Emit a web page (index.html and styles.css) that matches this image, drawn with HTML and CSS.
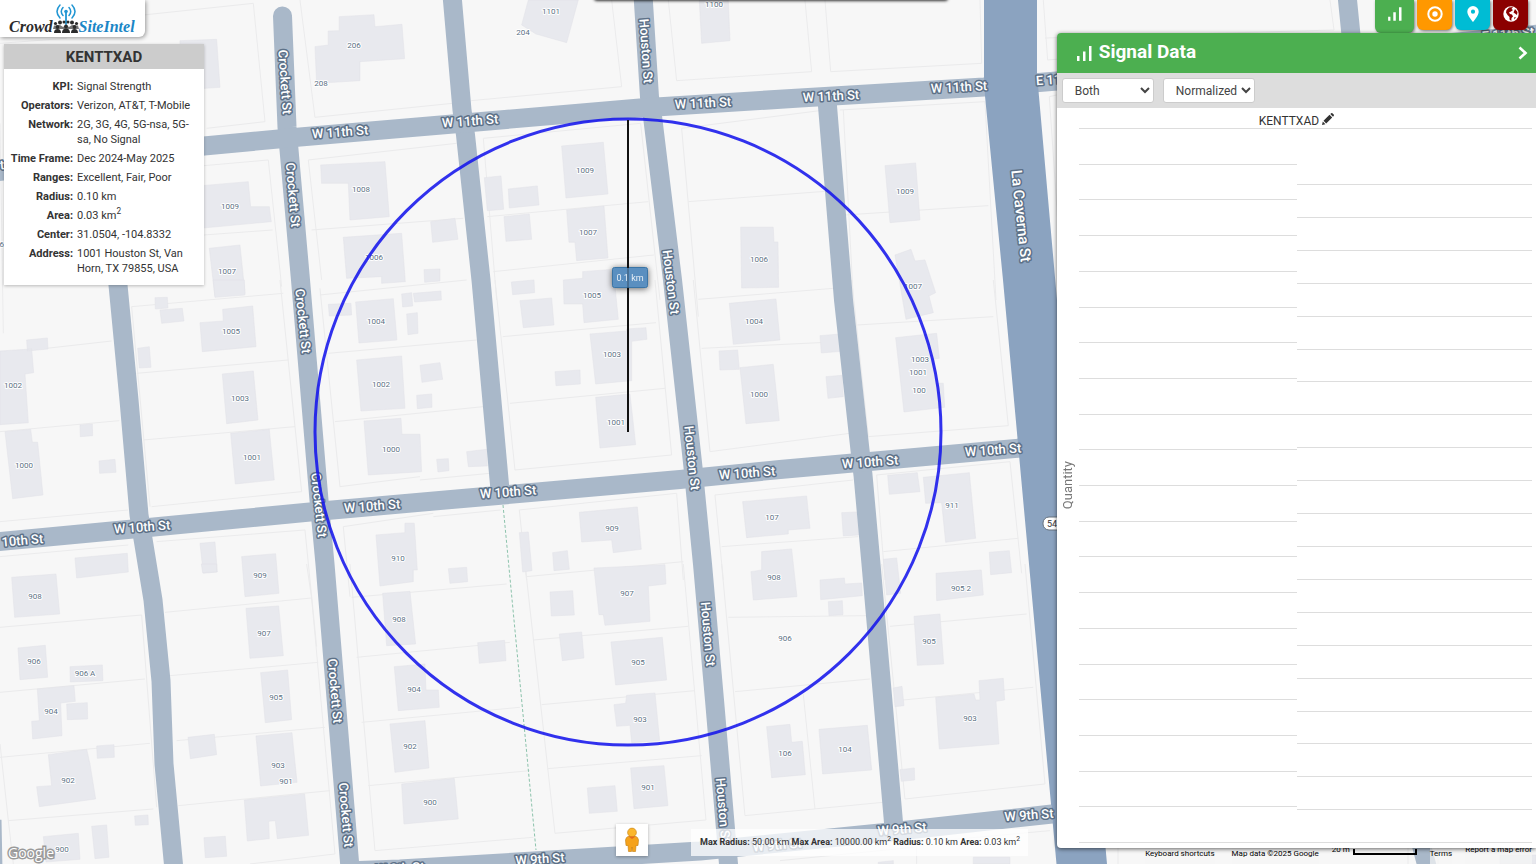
FILE: index.html
```html
<!DOCTYPE html>
<html lang="en">
<head>
<meta charset="utf-8">
<meta name="viewport" content="width=device-width, initial-scale=1">
<title>Crowd SiteIntel</title>
<link rel="stylesheet" href="styles.css">
</head>
<body>
<main class="app">
<svg class="map" viewBox="0 0 1536 864" preserveAspectRatio="xMinYMin slice" role="img" aria-label="Map of Van Horn, TX">
  <!-- Lot boundaries -->
  <g class="lots">
    <g transform="scale(.3333)"><path d="M430 45L760 10 795 365 620 385M900 0L945 352 1358 310M612 497L805 480 845 860M612 705L818 690M925 480L1370 430M925 480L965 840M935 690L1390 655M960 885L1400 840M0 130L200 115M0 370L10 1000"/></g>
    <g transform="translate(400 0) scale(.3333)"><path d="M213 302L665 260 635 0M805 0L830 242 1235 215 1215 0M250 415L722 370 780 900M250 415L290 900M262 650L745 605M280 815L762 765M845 385L1275 330M845 385L895 950M865 605L1330 570"/></g>
    <g transform="translate(780 0) scale(.3333)"><path d="M135 0L152 215 605 190 600 0M180 330L615 305 648 900M195 645L625 617M190 330L220 900M790 0L803 180 900 172M808 290L830 285M808 290L840 760"/></g>
    <g transform="translate(0 280) scale(.3333)"><path d="M140 205L335 183M0 455L358 422M0 725L385 690M395 80L850 40M410 280L865 240M430 480L885 440M455 680L905 635 840 0M395 80L450 680M960 25L1020 620 1260 590M985 220L1430 180M1005 425L1450 380M0 830L385 795M470 785L915 750 950 1100M1030 740L1300 700M1030 740L1050 950"/></g>
    <g transform="translate(400 280) scale(.3333)"><path d="M285 0L345 570 815 525 765 0M308 170L768 128M330 370L795 325M880 0L930 515 1350 460M895 58L1300 25M905 205L1320 185M60 600L270 580M100 710L302 690M358 690L830 640 850 900M358 690L380 900M380 890L850 845M945 645L1360 600M945 645L970 900M965 800L1375 770"/></g>
    <g transform="translate(780 280) scale(.3333)"><path d="M232 135L640 110M215 0L265 470 685 437 640 0M290 585L690 545 725 880M310 815L715 775M290 585L315 900"/></g>
    <g transform="translate(0 564) scale(.3333)"><path d="M0 190L425 153 470 730M0 385L435 345M0 580L450 538M25 770L460 735M0 540L25 770 40 900M495 145L935 102 1005 870 750 900M510 335L955 295M530 530L975 490M535 725L990 680M920 0L935 102M1055 100L1520 60M1070 280L1530 235M1085 475L1560 430M1105 665L1590 620M1050 0L1125 860 1600 820"/></g>
    <g transform="translate(400 564) scale(.3333)"><path d="M375 0L465 808 918 768 850 0M400 228L865 187M425 422L885 380M443 614L905 575M965 0L1035 755 1450 715M985 160L1400 155M1005 383L1410 345M1210 390L1245 735"/></g>
    <g transform="translate(780 564) scale(.3333)"><path d="M305 0L375 705 795 660 735 0M330 187L740 150M350 410L760 370M480 830L810 800M0 890L400 850M410 850V900"/></g>
    <path d="M1118 848V864M1408 848V864M1438 848V864M1330 0L1334 30 1045 38"/>
  </g>
  <!-- Building footprints -->
  <g class="buildings">
    <g transform="scale(.3333)"><path d="M1018 50L1122 44 1125 80 1206 73 1214 176 1080 185 1080 242 950 250 945 140 985 135 985 93 1018 92ZM540 122L650 118 660 262 540 270ZM570 560L745 545 752 620 808 620 814 665 600 685ZM628 745L720 735 735 880 645 890ZM962 495L1155 485 1168 650 1050 660 1045 550 965 550ZM1030 712L1205 700 1216 845 1145 850 1145 830 1040 835Z"/></g>
    <g transform="translate(400 0) scale(.3333)"><path d="M385 0L535 0 500 128 408 102 365 75ZM898 0L985 0 990 122 905 130ZM485 438L610 427 624 582 498 594ZM253 533L303 528 311 628 262 632ZM325 567L412 558 417 615 328 624ZM312 650L388 642 395 718 318 724ZM500 630L612 618 624 774 530 782 525 727 507 727ZM92 665L165 655 174 718 98 727ZM1022 682L1120 682 1122 726 1134 726 1136 862 1025 864ZM334 846L402 840 404 878 338 884ZM72 809L120 807 120 843 74 847ZM490 840L548 835 548 815 640 808 655 958 552 968 548 912 492 912Z"/></g>
    <g transform="translate(780 0) scale(.3333)"><path d="M315 497L407 489 420 660 330 668ZM345 765L393 748 405 783 435 780 467 878 447 888 460 938 378 958Z"/></g>
    <g transform="translate(0 280) scale(.3333)"><path d="M640 0L733 0 735 45 645 52ZM465 53L502 52 504 84 466 87ZM480 90L547 85 552 123 485 130ZM668 88L758 78 768 200 607 215 600 128 670 123ZM413 205L448 200 453 262 418 264ZM80 180L142 174 144 207 82 213ZM0 213L95 207 101 278 75 282 85 428 0 434ZM667 282L760 273 774 420 680 431ZM692 460L808 448 823 600 706 612ZM15 455L92 448 97 487 113 487 129 645 38 656ZM240 435L277 432 278 467 241 470ZM297 543L345 538 348 577 299 580ZM600 790L645 786 652 876 610 880ZM225 834L382 820 385 876 230 894ZM725 830L827 821 837 940 735 950ZM1067 66L1180 56 1191 180 1077 189ZM1070 240L1205 228 1215 385 1083 393ZM1092 423L1203 415 1206 463 1260 463 1265 575 1105 585ZM985 73L1053 70 1055 105 988 108ZM1128 765L1215 758 1215 730 1243 730 1252 870 1240 870 1240 905 1140 918Z"/></g>
    <g transform="translate(400 280) scale(.3333)"><path d="M5 42L35 38 38 78 8 81ZM40 40L123 33 124 60 44 66ZM20 102L52 98 54 160 24 164ZM360 62L455 54 462 135 370 143ZM60 256L120 248 128 298 66 307ZM50 346L95 342 96 382 52 386ZM570 162L680 153 680 147 738 143 741 178 695 184 695 302 587 312ZM465 275L540 270 541 312 468 317ZM587 352L690 342 707 494 600 504ZM988 70L1128 57 1140 180 1000 193ZM957 213L1013 210 1018 268 960 270ZM1020 263L1120 253 1138 422 1038 431ZM200 515L260 508 262 558 205 560ZM110 538L145 536 147 572 114 576ZM538 697L712 681 724 808 640 818 635 780 545 786ZM358 758L385 756 396 872 368 876ZM458 818L502 812 508 868 462 872ZM145 866L200 862 203 905 150 910ZM1028 665L1220 648 1230 745 1165 750 1165 762 1040 773ZM1085 815L1175 807 1191 950 1060 960 1053 875 1085 870Z"/></g>
    <g transform="translate(780 280) scale(.3333)"><path d="M120 167L180 162 184 214 124 219ZM138 290L186 286 190 350 144 355ZM347 173L470 160 478 235 462 237 467 310 490 310 494 382 372 396ZM323 586L412 578 420 635 328 643ZM430 592L568 578 587 775 497 787 485 668 437 670ZM185 698L230 696 236 765 190 768ZM628 817L688 812 695 878 632 884ZM468 880L604 870 610 945 470 962ZM310 838L350 834 362 940 320 945Z"/></g>
    <g transform="translate(0 564) scale(.3333)"><path d="M35 40L168 30 179 150 44 160ZM54 252L136 244 143 340 60 347ZM210 308L307 303 309 350 211 354ZM112 375L222 365 226 412 182 417 186 515 98 525 95 472 118 470ZM200 420L262 416 263 465 202 467ZM145 572L260 556 270 600 287 705 118 728 110 668 155 665ZM290 546L342 542 343 580 292 583ZM130 818L235 808 240 886 138 894ZM275 787L320 783 327 880 285 884ZM404 756L444 753 445 782 406 784ZM738 133L836 126 850 275 750 283ZM782 326L863 318 875 467 796 476ZM768 516L876 506 891 655 782 666ZM564 520L643 511 650 572 571 584ZM733 708L914 690 926 814 832 824 826 770 806 772 808 824 742 831ZM612 821L676 817 680 877 616 881ZM604 0L650 0 650 24 608 26ZM1148 88L1230 82 1247 240 1160 245ZM1183 308L1275 300 1278 378 1315 378 1318 430 1195 440ZM1170 480L1275 470 1287 612 1185 625ZM1205 660L1363 643 1375 765 1212 780Z"/></g>
    <g transform="translate(400 564) scale(.3333)"><path d="M582 12L795 2 798 60 745 66 750 172 615 184 610 152 597 152ZM450 84L518 80 523 153 454 156ZM478 210L545 204 552 282 487 290ZM633 234L787 220 800 348 647 363ZM642 422L677 418 680 394 765 387 779 530 695 536 690 484 650 487ZM692 612L792 605 804 725 702 734ZM562 672L645 665 652 742 568 748ZM233 236L314 229 318 290 238 298ZM1100 488L1170 481 1175 535 1207 532 1216 632 1115 641Z"/></g>
    <g transform="translate(780 564) scale(.3333)"><path d="M120 48L193 42 195 60 245 57 247 95 122 107ZM145 113L187 110 189 152 147 155ZM402 157L480 150 491 300 412 304ZM340 372L366 367 372 425 345 428ZM597 350L670 343 674 408 648 412 657 540 478 555 467 400 582 390 587 408 600 408ZM117 496L262 484 275 618 128 630ZM360 617L403 612 404 648 364 652ZM580 880H690V900H580ZM295 895L340 890V900H295Z"/></g>
    <path d="M1500 855H1536V864H1500Z"/>
  </g>
  <path class="trail" d="M503 505L536 850"/>
  <!-- Streets -->
  <g class="streets">
    <path d="M104 150L118 285 129 400 139 515 144 545 153 600 161 681 164 764 174 870"/>
    <path class="dead-end" d="M282.500 16L287 127 300.500 280 319 500 325 564 350 868"/>
    <path d="M452 -5L462 110 465.500 135 481 280 500 490"/>
    <path d="M643 -5L649.500 97 652.700 118 672.500 280 693 467 702.500 564 714.500 700 729 870"/>
    <path d="M827 100L843.500 300 860 450 863 475 871 564 894 828"/>
    <path d="M-5 172L204 146 300 137 400 128.500 640 108 800 98 984 87 1057 81 1540 34"/>
    <path d="M-5 542L133 529 310 512 400 504 680 479.500 780 469.500 1020 448"/>
    <path d="M345 871L400 869 700 851 890 832 1052 814"/>
    <path d="M1347 -5L1352 45M1420 840L1428 870M-8 820L-7 870"/>
    <path class="highway" d="M984 0H1037V74L1057 300 1107 864H1056.500L1029 564 1003 280 985 96 984 77Z"/>
  </g>
  <g class="street-names">
    <text transform="translate(-24 167) rotate(-5)">W 11th St</text>
    <text transform="translate(340 132) rotate(-4)">W 11th St</text>
    <text transform="translate(470 121) rotate(-4)">W 11th St</text>
    <text transform="translate(703 103) rotate(-3)">W 11th St</text>
    <text transform="translate(831 96) rotate(-3)">W 11th St</text>
    <text transform="translate(959 87) rotate(-3)">W 11th St</text>
    <text transform="translate(1062 79) rotate(-4)">E 11th St</text>
    <text transform="translate(1508 34) rotate(-5)">E 11th St</text>
    <text transform="translate(15 541) rotate(-5)">W 10th St</text>
    <text transform="translate(142 527) rotate(-4)">W 10th St</text>
    <text transform="translate(372 506) rotate(-4)">W 10th St</text>
    <text transform="translate(508 492) rotate(-4)">W 10th St</text>
    <text transform="translate(747 473) rotate(-4)">W 10th St</text>
    <text transform="translate(870 462) rotate(-4)">W 10th St</text>
    <text transform="translate(993 450) rotate(-4)">W 10th St</text>
    <text transform="translate(400 868) rotate(-3)">W 9th St</text>
    <text transform="translate(540 859) rotate(-4)">W 9th St</text>
    <text transform="translate(777 845) rotate(-5)">W 9th St</text>
    <text transform="translate(902 829) rotate(-5)">W 9th St</text>
    <text transform="translate(1029 815) rotate(-4)">W 9th St</text>
    <text transform="translate(285 82) rotate(86)">Crockett St</text>
    <text transform="translate(293 195) rotate(85)">Crockett St</text>
    <text transform="translate(303 321) rotate(84)">Crockett St</text>
    <text transform="translate(319 505) rotate(84)">Crockett St</text>
    <text transform="translate(335 691) rotate(85)">Crockett St</text>
    <text transform="translate(346 815) rotate(85)">Crockett St</text>
    <text transform="translate(646 51) rotate(86)">Houston St</text>
    <text transform="translate(671 282) rotate(83)">Houston St</text>
    <text transform="translate(692 458) rotate(84)">Houston St</text>
    <text transform="translate(708 634) rotate(85)">Houston St</text>
    <text transform="translate(723 810) rotate(85)">Houston St</text>
    <text class="major" transform="translate(1021 216) rotate(84)">La Caverna St</text>
  </g>
  <g class="house-numbers">
    <text x="354" y="45">206</text><text x="321" y="83">208</text><text x="551" y="11">1101</text><text x="523" y="32">204</text><text x="714" y="4">1100</text>
    <text x="230" y="206">1009</text><text x="361" y="189">1008</text><text x="585" y="170">1009</text><text x="905" y="191">1009</text>
    <text x="227" y="271">1007</text><text x="374" y="257">1006</text><text x="588" y="232">1007</text><text x="759" y="259">1006</text><text x="913" y="286">1007</text>
    <text x="231" y="331">1005</text><text x="376" y="321">1004</text><text x="592" y="295">1005</text><text x="754" y="321">1004</text><text x="612" y="354">1003</text>
    <text x="920" y="359">1003</text><text x="918" y="372">1001</text><text x="919" y="390">100</text>
    <text x="13" y="385">1002</text><text x="240" y="398">1003</text><text x="381" y="384">1002</text><text x="759" y="394">1000</text><text x="616" y="422">1001</text>
    <text x="24" y="465">1000</text><text x="252" y="457">1001</text><text x="391" y="449">1000</text><text x="-5" y="244">1006</text>
    <text x="612" y="528">909</text><text x="772" y="517">107</text><text x="952" y="505">911</text><text x="398" y="558">910</text><text x="260" y="575">909</text>
    <text x="35" y="596">908</text><text x="399" y="619">908</text><text x="627" y="593">907</text><text x="774" y="577">908</text><text x="961" y="588">905 2</text>
    <text x="264" y="633">907</text><text x="785" y="638">906</text><text x="929" y="641">905</text><text x="34" y="661">906</text><text x="85" y="673">906 A</text>
    <text x="638" y="662">905</text><text x="414" y="689">904</text><text x="276" y="697">905</text><text x="51" y="711">904</text><text x="640" y="719">903</text><text x="970" y="718">903</text>
    <text x="410" y="746">902</text><text x="785" y="753">106</text><text x="845" y="749">104</text><text x="278" y="765">903</text><text x="286" y="781">901</text><text x="68" y="780">902</text>
    <text x="648" y="787">901</text><text x="430" y="802">900</text><text x="62" y="849">900</text>
  </g>
  <g class="shield"><rect x="1043" y="517" width="26" height="13" rx="6"/><text x="1052" y="524">54</text></g>
  <!-- Measured radius -->
  <circle class="coverage" cx="628" cy="432" r="313"/>
  <g class="radius-tag"><rect x="612.500" y="267.500" width="35" height="20" rx="2"/><text x="630" y="278">0.1 km</text></g>
  <path class="radius-line" d="M628 120V268M628 288V432"/>
  <path class="radius-line radius-under" d="M628 268V288"/>
</svg>

<a class="logo" href="#" aria-label="Crowd SiteIntel">
  <span class="logo-crowd">Crowd</span>
  <svg class="logo-mark" viewBox="0 0 26 32" aria-hidden="true">
    <g fill="none" stroke="#2196d3" stroke-width="1.500" stroke-linecap="round"><path d="M7 2Q1 8.500 7 15M19 2Q25 8.500 19 15M10 4.500Q6.500 8.500 10 12.500M16 4.500Q19.500 8.500 16 12.500"/><path d="M13 9V21" stroke-width="1.800"/></g>
    <circle cx="13" cy="8.500" r="1.800" fill="#2196d3"/>
    <g fill="#2b2b2b"><circle cx="7" cy="19.500" r="2"/><circle cx="19" cy="19.500" r="2"/><circle cx="2.500" cy="20.500" r="1.600"/><circle cx="23.500" cy="20.500" r="1.600"/><circle cx="11" cy="19" r="1.500"/><circle cx="15" cy="19" r="1.500"/><circle cx="4.500" cy="24" r="1.900"/><circle cx="13" cy="23.500" r="1.900"/><circle cx="21.500" cy="24" r="1.900"/><path d="M0 26L1 22.500H4L7 22 10 24 13 22 16 24 19 22 22 22.500H25L26 26Z" opacity=".65"/><path d="M1 30Q1 26 4.500 26T8 30ZM9 30Q9 25.500 13 25.500T17 30ZM18 30Q18 26 21.500 26T25 30Z"/></g>
  </svg>
  <span class="logo-site">SiteIntel</span>
</a>

<section class="info">
  <h1 class="info-title">KENTTXAD</h1>
  <dl class="info-list">
    <dt>KPI:</dt><dd>Signal Strength</dd>
    <dt>Operators:</dt><dd>Verizon, AT&amp;T, T-Mobile</dd>
    <dt>Network:</dt><dd>2G, 3G, 4G, 5G-nsa, 5G-sa, No Signal</dd>
    <dt>Time Frame:</dt><dd>Dec 2024-May 2025</dd>
    <dt>Ranges:</dt><dd>Excellent, Fair, Poor</dd>
    <dt>Radius:</dt><dd>0.10 km</dd>
    <dt>Area:</dt><dd>0.03 km<sup>2</sup></dd>
    <dt>Center:</dt><dd>31.0504, -104.8332</dd>
    <dt>Address:</dt><dd>1001 Houston St, Van Horn, TX 79855, USA</dd>
  </dl>
</section>

<div class="drawer-edge"></div>

<nav class="tabs" aria-label="Tools">
  <button class="tab tab-signal" type="button" aria-label="Signal data"><svg viewBox="0 0 14 14"><path d="M1 9.500H3V13H1ZM5.500 5.500H7.700V13H5.500ZM10.500 1H12.700V13H10.500Z" fill="#fff"/></svg></button>
  <button class="tab tab-target" type="button" aria-label="Target"><svg viewBox="0 0 16 16"><circle cx="8" cy="8" r="6.700" fill="none" stroke="#fff" stroke-width="2"/><circle cx="8" cy="8" r="2.700" fill="#fff"/></svg></button>
  <button class="tab tab-pin" type="button" aria-label="Location"><svg viewBox="0 0 16 16"><path fill="#fff" fill-rule="evenodd" d="M8 0A5.700 5.700 0 0 0 2.300 5.700C2.300 9.500 8 16 8 16S13.700 9.500 13.700 5.700A5.700 5.700 0 0 0 8 0ZM8 3.600A2.100 2.100 0 1 1 8 7.800 2.100 2.100 0 0 1 8 3.600Z"/></svg></button>
  <button class="tab tab-globe" type="button" aria-label="World"><svg viewBox="0 0 16 16"><circle cx="8" cy="8" r="7.700" fill="#fff"/><path fill="#8b0000" d="M6 1.500L10 1 8.500 3 10 4 8 5.500 6 6.500 7 8 9 8.500 10 10.500 8.500 12 8.300 15 6.500 13.500 6.500 11 4.500 9 3 6.500 3.500 4ZM12 3L14.500 6 14 9 12 7.500 10.500 6.500ZM11.500 11L13 11.500 11 13.500Z"/></svg></button>
</nav>

<button class="pegman" type="button" aria-label="Street View"><svg viewBox="0 0 16 26"><path fill="#f5a21b" stroke="#c27c0c" stroke-width=".6" d="M4 9.500Q2 10 1.500 13L2 18.500H4L4.500 24.500H7.500L8 20 8.500 24.500H11.500L12 18.500H14L14.500 13Q14 10 12 9.500Z"/><circle cx="8" cy="5.500" r="4.400" fill="#fbb62c" stroke="#c27c0c" stroke-width=".6"/><path d="M4.500 9.500H11.500L8 12Z" fill="#e5681d"/></svg></button>

<p class="stats"><b>Max Radius:</b> 50.00 km <b>Max Area:</b> 10000.00 km<sup>2</sup> <b>Radius:</b> 0.10 km <b>Area:</b> 0.03 km<sup>2</sup></p>

<a class="google" href="#">Google</a>

<footer class="credits">
  <button class="credit credit-keys" type="button">Keyboard shortcuts</button>
  <span class="credit">Map data ©2025 Google</span>
  <span class="scale">20 m <span class="scale-bar"></span></span>
  <a class="credit" href="#">Terms</a>
  <a class="credit credit-up" href="#">Report a map error</a>
</footer>

<aside class="panel">
  <header class="panel-head">
    <svg class="panel-icon" viewBox="0 0 15 16" aria-hidden="true"><path d="M0 11H2.500V16H0ZM6 6.500H8.500V16H6ZM12 1H14.500V16H12Z" fill="#fff"/></svg>
    <h2 class="panel-title">Signal Data</h2>
    <button class="panel-close" type="button" aria-label="Collapse"><svg viewBox="0 0 10 14"><path d="M1.500 1.500L7.500 7 1.500 12.500" fill="none" stroke="#fff" stroke-width="2.600"/></svg></button>
  </header>
  <div class="panel-tools">
    <select class="pick" aria-label="Series"><option>Both</option></select>
    <select class="pick" aria-label="Scale"><option>Normalized</option></select>
  </div>
  <div class="chart">
    <h3 class="chart-title">KENTTXAD <svg viewBox="0 0 12 12" aria-hidden="true"><path d="M0 12L.8 8.600 3.400 11.200ZM1.500 7.800L7.500 1.800 10.200 4.500 4.200 10.500ZM8.300 1L9.200 .2Q9.800-.2 10.400 .3L11.700 1.600Q12.200 2.200 11.800 2.800L11 3.700Z" fill="#333"/></svg></h3>
    <span class="axis-name">Quantity</span>
    <div class="plot">
      <div class="plot-col"><i></i><i></i><i></i><i></i><i></i><i></i><i></i><i></i><i></i><i></i><i></i><i></i><i></i><i></i><i></i><i></i><i></i><i></i><i></i><i></i></div>
      <div class="plot-col plot-right"><i class="lead"></i><i></i><i></i><i></i><i></i><i></i><i></i><i></i><i></i><i></i><i></i><i></i><i></i><i></i><i></i><i></i><i></i><i></i><i></i><i></i><i></i></div>
    </div>
  </div>
</aside>
</main>
</body>
</html>
```
FILE: styles.css
```css
* { box-sizing: border-box; }
body { margin: 0; font-family: Roboto, "Liberation Sans", sans-serif; color: #333; }
h1, h2, h3, p, dl, dd { margin: 0; }
button { border: 0; padding: 0; font: inherit; color: inherit; background: none; cursor: pointer; }
a { color: inherit; text-decoration: none; }
sup { line-height: 0; font-size: 75%; }

.app { position: relative; height: 100vh; overflow: hidden; background: #f7f7f7; }
.map { display: block; width: 100%; height: 100%; }

/* Map layers */
.lots path { fill: none; stroke: #ebebec; stroke-width: 1; vector-effect: non-scaling-stroke; }
.buildings { fill: #e8e9ee; }
.buildings path { stroke: #e1e2e8; stroke-width: 1; vector-effect: non-scaling-stroke; stroke-opacity: .5; }
.trail { fill: none; stroke: #8cc3ac; stroke-width: 1; stroke-dasharray: 3 2; }
.streets path { fill: none; stroke: #a9b8c9; stroke-width: 19; stroke-linejoin: round; }
.streets .dead-end { stroke-linecap: round; }
.streets .highway { fill: #8ba3c0; stroke: none; }
.map text { text-anchor: middle; dominant-baseline: central; }
.street-names text { font-size: 13px; font-weight: 500; fill: #fff; stroke: #5d7188; stroke-width: 3px; stroke-linejoin: round; paint-order: stroke; }
.street-names .major { font-size: 15px; }
.house-numbers text { font-size: 8px; fill: #5c7184; stroke: #fff; stroke-width: 2px; stroke-linejoin: round; paint-order: stroke; }
.shield rect { fill: #fff; stroke: #66727f; }
.shield text { font-size: 9px; fill: #333; }
.coverage { fill: none; stroke: #1414eb; stroke-opacity: .87; stroke-width: 3; }
.radius-line { stroke: #111; stroke-width: 2; }
.radius-under { stroke-opacity: .25; }
.radius-tag { filter: drop-shadow(0 1px 3px rgba(0, 0, 0, .6)); }
.radius-tag rect { fill: #5a8fc0; stroke: #3b75a6; }
.radius-tag text { font-size: 9px; fill: #fff; fill-opacity: .85; }

.logo { position: absolute; top: 0; left: 0; display: flex; align-items: flex-end; height: 37px; padding: 0 10px 2px 9px; background: #fff; border-bottom-right-radius: 6px; box-shadow: 1px 1px 4px rgba(0, 0, 0, .4); font: italic bold 16px/17px "Liberation Serif", serif; }
.logo-crowd { color: #2b2b2b; }
.logo-mark { width: 26px; height: 32px; }
.logo-site { color: #1b86c6; }

.info { position: absolute; top: 44px; left: 4px; width: 200px; background: #fff; box-shadow: 0 1px 3px rgba(0, 0, 0, .25); font-size: 11px; line-height: 15px; }
.info-title { padding: 4px 0 3px; background: #ccc; font-size: 15px; line-height: 18px; text-align: center; }
.info-list { display: grid; grid-template-columns: 65px 1fr; gap: 4px; padding: 10px 4px 9px; }
.info-list dt { font-weight: 700; text-align: right; white-space: nowrap; }

.drawer-edge { position: absolute; top: -6px; left: 594px; width: 354px; height: 6px; border-radius: 4px; box-shadow: 0 1px 3px rgba(0, 0, 0, .8); }

.tabs { position: absolute; top: 0; right: 8px; display: flex; align-items: flex-start; gap: 3px; }
.tab { display: flex; align-items: center; justify-content: center; width: 35px; height: 30px; padding-bottom: 2px; border-radius: 0 0 6px 6px; box-shadow: 1px 1px 3px rgba(0, 0, 0, .5); }
.tab svg { width: 16px; height: 16px; }
.tab-signal { width: 39px; height: 33px; padding-bottom: 5px; background: #4caf50; }
.tab-target { background: #ff9800; }
.tab-pin { background: #00bcd4; }
.tab-globe { background: #8b0000; }

.pegman { position: absolute; bottom: 8px; left: 616px; display: flex; align-items: center; justify-content: center; width: 32px; height: 32px; background: #fff; box-shadow: 0 1px 3px rgba(0, 0, 0, .3); }
.pegman svg { width: 16px; height: 26px; }
.stats { position: absolute; bottom: 8px; left: 691px; padding: 0 8px 0 9px; background: rgba(255, 255, 255, .75); font-size: 9px; line-height: 27px; white-space: nowrap; }
.google { position: absolute; bottom: 1px; left: 8px; color: #fff; font: 14px/20px "Open Sans", sans-serif; -webkit-text-stroke: 3px #9a9a9a; paint-order: stroke; }

.credits { position: absolute; right: 4px; bottom: 0; display: flex; align-items: flex-end; gap: 13px; color: #000; font-size: 8px; line-height: 10px; white-space: nowrap; }
.credits .credit { background: rgba(245, 245, 245, .7); padding: 4px 0 5px; }
.credits .credit-up { padding: 0 0 9px; }
.credits .credit-keys { margin-right: 4px; }
.scale { display: flex; align-items: flex-end; gap: 3px; padding-bottom: 9px; }
.scale-bar { width: 64px; height: 6px; border: 2px solid #000; border-top: 0; }

.panel { position: absolute; top: 33px; right: 0; bottom: 16px; width: 31.2%; display: flex; flex-direction: column; background: #fff; border-radius: 4px 0 0 4px; box-shadow: 0 1px 4px rgba(0, 0, 0, .6); overflow: hidden; }
.panel-head { display: flex; align-items: center; gap: 7px; height: 40px; padding: 0 8px 0 20px; background: #4caf50; color: #fff; }
.panel-icon { width: 15px; height: 16px; }
.panel-title { flex: 1; padding-bottom: 2px; font-size: 19px; line-height: 36px; }
.panel-close svg { display: block; width: 10px; height: 14px; }
.panel-tools { display: flex; gap: 9px; padding: 5px; background: #ddd; }
.pick { width: 92px; height: 25px; padding: 0 0 0 8px; border: 1px solid #ccc; border-radius: 3px; background-color: #fff; color: #444; font: 12px Roboto, sans-serif; }

.chart { flex: 1; display: grid; grid-template: 20px 1fr / 22px 1fr; padding: 0 4px 5px 0; }
.chart-title { grid-column: 1 / 3; justify-self: center; align-self: end; z-index: 1; margin-left: 4px; padding: 0 2px; background: #fff; font-size: 12px; line-height: 14px; font-weight: 400; }
.chart-title svg { width: 12px; height: 12px; }
.axis-name { align-self: center; justify-self: center; writing-mode: vertical-rl; transform: rotate(180deg); color: #777; font-size: 13px; }
.plot { display: grid; grid-template-columns: 218fr 235fr; border-top: 1px solid #ddd; }
.plot-col { display: flex; flex-direction: column; }
.plot-col i { flex: 1; border-bottom: 1px solid #ddd; }
.plot-col .lead { flex: 0 0 56px; }
```
